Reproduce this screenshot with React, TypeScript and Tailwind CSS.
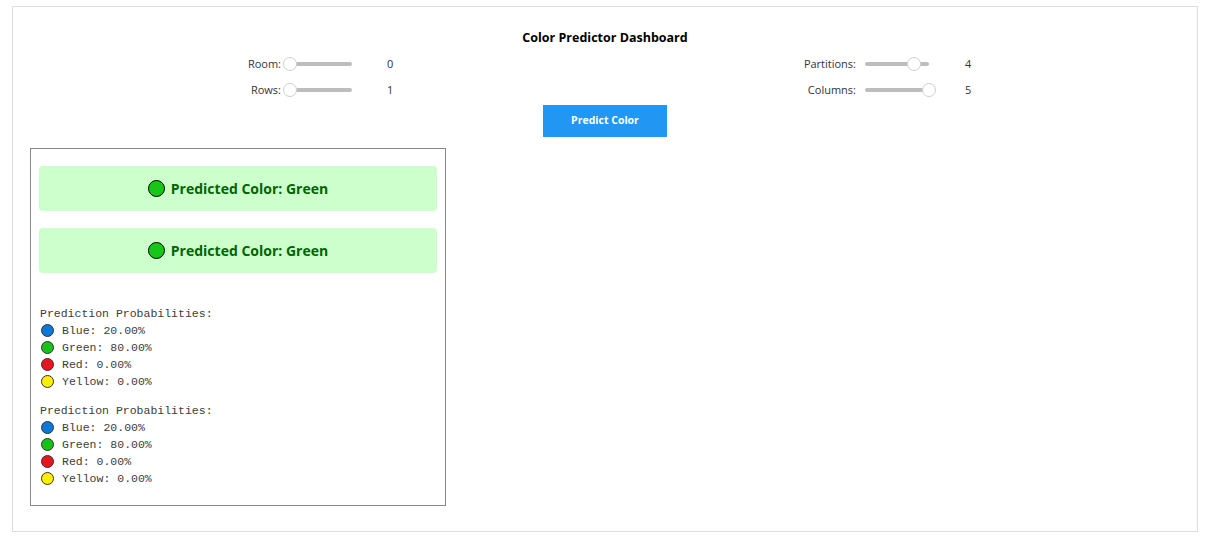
const sliders = [
  [
    { label: "Room:", value: "0", frac: 0 },
    { label: "Partitions:", value: "4", frac: 0.75 },
  ],
  [
    { label: "Rows:", value: "1", frac: 0 },
    { label: "Columns:", value: "5", frac: 1 },
  ],
];

const probs = [
  { name: "Blue", value: "20.00%", color: "bg-[#0a78d8]" },
  { name: "Green", value: "80.00%", color: "bg-[#16c216]" },
  { name: "Red", value: "0.00%", color: "bg-[#e8141e]" },
  { name: "Yellow", value: "0.00%", color: "bg-[#ffee00]" },
];

const Slider = ({ frac, width }: { frac: number; width: number }) => (
  <div className="relative h-[14px]" style={{ width }}>
    <div className="absolute left-0 right-0 top-[5px] h-[4px] rounded-full bg-[#bdbdbd]" />
    <div
      className="absolute top-0 h-[14px] w-[14px] -ml-[7px] rounded-full border border-[#cfcfcf] bg-white"
      style={{ left: 4 + frac * (width - 4) }}
    />
  </div>
);

const PredictedBox = () => (
  <div className="h-[45px] rounded-[4px] bg-[#ccffcc] flex items-center justify-center">
    <span className="w-[17px] h-[17px] rounded-full bg-[#17c717] border border-black mr-[6px]" />
    <span className="text-[14px] font-bold text-[#006400]">Predicted Color: Green</span>
  </div>
);

const ProbBlock = () => (
  <div className="font-['Liberation_Mono',monospace] text-[11.5px] leading-[17px] text-[#3c3c3c]">
    <div className="pl-px">Prediction Probabilities:</div>
    {probs.map((p) => (
      <div key={p.name} className="flex items-center">
        <span className={`ml-[2px] mr-[8px] w-[13px] h-[13px] rounded-full border border-[#333] ${p.color}`} />
        <span>
          {p.name}: {p.value}
        </span>
      </div>
    ))}
  </div>
);

export default function App() {
  return (
    <div className="min-h-screen bg-white font-['Open_Sans','Noto_Sans',sans-serif]">
      <div className="ml-3 mt-1.5 w-[1186px] h-[526px] border border-[#dddddd]">
        <h1 className="pt-[23px] text-center text-[12.5px] leading-[16px] font-bold text-black">
          Color Predictor Dashboard
        </h1>

        <div className="mt-[5px]">
          {sliders.map((row, i) => (
            <div key={i} className="flex items-center h-[26px] pl-[188px] text-[11px] text-[#333]">
              <div className="w-[575px] flex items-center">
                <div className="w-[80px] text-right">{row[0].label}</div>
                <div className="ml-[5px]">
                  <Slider frac={row[0].frac} width={66} />
                </div>
                <div className="pl-[35px]">{row[0].value}</div>
              </div>
              <div className="flex items-center">
                <div className="w-[80px] text-right">{row[1].label}</div>
                <div className="ml-[9px]">
                  <Slider frac={row[1].frac} width={64} />
                </div>
                <div className="pl-[36px]">{row[1].value}</div>
              </div>
            </div>
          ))}
        </div>

        <div className="mt-[2px] flex justify-center">
          <button className="w-[124px] h-[32px] bg-[#2196f3] text-white text-[10.5px] font-bold">
            Predict Color
          </button>
        </div>

        <div className="mt-[11px] ml-[17px] w-[416px] h-[358px] border border-[#888888] pt-[17px] px-[8px]">
          <PredictedBox />
          <div className="mt-[17px]">
            <PredictedBox />
          </div>
          <div className="mt-[32px]">
            <ProbBlock />
          </div>
          <div className="mt-[12px]">
            <ProbBlock />
          </div>
        </div>
      </div>
    </div>
  );
}
